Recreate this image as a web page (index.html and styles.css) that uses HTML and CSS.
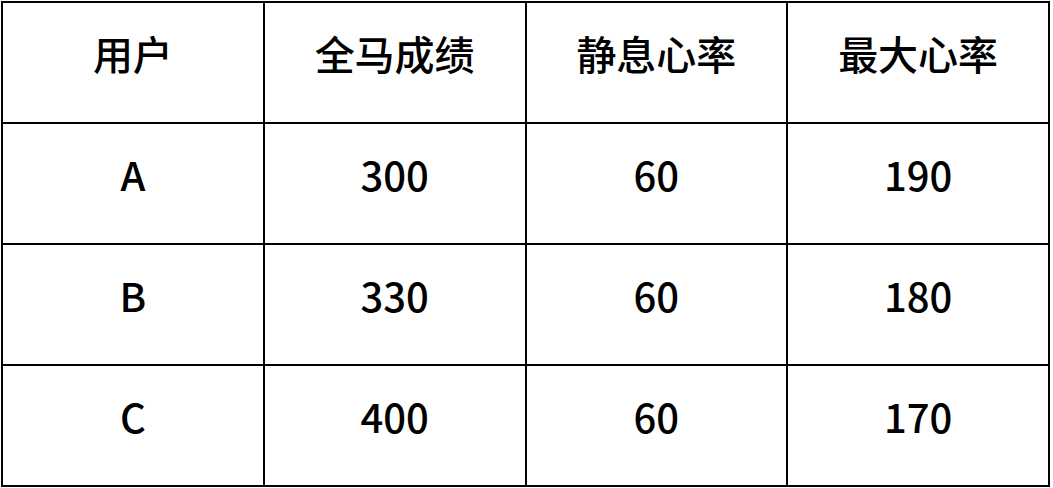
FILE: index.html
```html
<!DOCTYPE html>
<html lang="zh">
<head>
<meta charset="utf-8">
<link rel="stylesheet" href="styles.css">
</head>
<body>
<table class="grid">
  <tr class="head"><th>用户</th><th>全马成绩</th><th>静息心率</th><th>最大心率</th></tr>
  <tr><td>A</td><td>300</td><td>60</td><td>190</td></tr>
  <tr><td>B</td><td>330</td><td>60</td><td>180</td></tr>
  <tr><td>C</td><td>400</td><td>60</td><td>170</td></tr>
</table>
</body>
</html>
```
FILE: styles.css
```css
html, body { margin: 0; padding: 0; background: #fff; }
body { padding: 1px 0 0 1px; }
.grid {
  border-collapse: collapse;
  table-layout: fixed;
  width: 1049px;
  font-family: "Noto Sans CJK SC", "Noto Sans", sans-serif;
  color: #000;
}
.grid th, .grid td {
  border: 2px solid #000;
  text-align: center;
  vertical-align: middle;
  height: 121px;
  padding: 0 0 19px 0;
  box-sizing: border-box;
  line-height: 1;
}
.grid th { font-size: 40px; font-weight: 500; }
.grid td { font-size: 40px; font-weight: 500; }
```
